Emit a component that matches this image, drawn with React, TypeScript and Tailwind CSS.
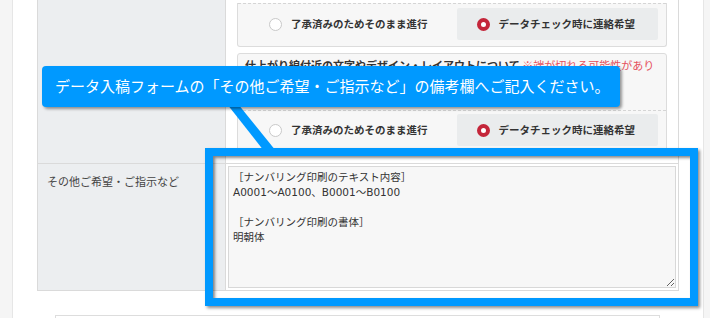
import React from 'react';

const jp = { fontFamily: '"Noto Sans CJK JP", "Liberation Sans", sans-serif' };
// Latin in a wider face, CJK falls through to Noto
const memo = { fontFamily: '"DejaVu Sans", "Noto Sans CJK JP", sans-serif' };

function Radio({ checked }: { checked?: boolean }) {
  if (checked) {
    return <span className="block h-[13px] w-[13px] shrink-0 rounded-full border-[4px] border-[#c4263a] bg-white" />;
  }
  return <span className="block h-[13px] w-[13px] shrink-0 rounded-full border border-[#c9c9c9] bg-white" />;
}

function Options() {
  return (
    <div className="grid grid-cols-2 gap-[6px] pl-[11px] pr-[8px]">
      <div className="flex h-[32px] items-center gap-[9px] pl-[20px]">
        <Radio />
        <span className="text-[10.5px] font-bold text-[#333]">了承済みのためそのまま進行</span>
      </div>
      <div className="flex h-[32px] items-center gap-[9px] rounded-[2px] bg-[#eaeced] pl-[20px]">
        <Radio checked />
        <span className="text-[10.5px] font-bold text-[#333]">データチェック時に連絡希望</span>
      </div>
    </div>
  );
}

export default function App() {
  return (
    <div className="relative flex h-[318px] w-[710px] overflow-hidden bg-white" style={jp}>
      {/* side strips */}
      <div className="w-[13px] shrink-0 border-r border-[#e6e6e6] bg-[#f5f5f5]" />

      <div className="w-[690px] shrink-0 pl-[24px]">
        <div className="w-[642px] border-x border-b border-[#dadada]">
          {/* row 1 */}
          <div className="flex h-[164px] border-b border-[#dadada]">
            <div className="w-[188px] shrink-0 border-r border-[#dadada] bg-[#eceef0]" />
            <div className="flex-1 px-[11px]">
              <div className="h-[44px] rounded-b-[3px] border-x border-b border-[#dcdcdc] bg-[#f7f7f7]">
                <div className="mt-[3px] border-t border-dashed border-[#d5d5d5] pt-[4px]">
                  <Options />
                </div>
              </div>
              <div className="mt-[6px] h-[101px] rounded-[3px] border border-[#dcdcdc] bg-[#f7f7f7]">
                <p className="px-[7px] pt-[3px] text-[11px] font-bold leading-[17px] text-[#333]">
                  仕上がり線付近の文字やデザイン・レイアウトについて{' '}
                  <span className="font-normal text-[#e5505c]">
                    ※端が切れる可能性があり
                    <br />
                    ますのでご確認ください。
                  </span>
                </p>
                <div className="mt-[19px] border-t border-dashed border-[#d5d5d5] pt-[3px]">
                  <Options />
                </div>
              </div>
            </div>
          </div>

          {/* row 2 */}
          <div className="flex h-[126px]">
            <div className="w-[188px] shrink-0 border-r border-[#dadada] bg-[#eceef0] pl-[9px] pt-[9px] text-[11px] leading-[16px] text-[#444]">
              その他ご希望・ご指示など
            </div>
            <div className="flex-1 p-[2px]">
              <textarea
                readOnly
                className="block h-[122px] w-full resize border border-[#d8d8d8] bg-[#f7f7f7] px-[4px] py-[3px] text-[10.5px] leading-[15px] text-[#333] outline-none"
                style={memo}
                defaultValue={'［ナンバリング印刷のテキスト内容］\nA0001～A0100、B0001～B0100\n\n［ナンバリング印刷の書体］\n明朝体'}
              />
            </div>
          </div>
        </div>

        <div className="ml-[18px] mt-[24px] h-[40px] w-[605px] border border-[#dddddd] bg-white" />
      </div>

      <div className="flex-1 border-l border-[#e6e6e6] bg-[#f5f5f5]" />

      {/* highlight frame */}
      <div className="absolute left-[205px] top-[148px] h-[158px] w-[493px] border-[8px] border-[#0099ff] shadow-[2px_2px_3px_rgba(0,0,0,0.45),inset_2px_2px_3px_rgba(0,0,0,0.45)]" />

      {/* callout tail */}
      <svg className="absolute left-0 top-0" width="710" height="318">
        <polygon points="227,104 238,104 276,151 264,151" fill="#0099ff" />
      </svg>

      {/* callout */}
      <div className="absolute left-[42px] top-[66px] flex h-[41px] w-[578px] items-center rounded-[4px] bg-[#0099ff] pl-[13px] text-[15px] text-white shadow-[2px_2px_3px_rgba(0,0,0,0.4)]">
        データ入稿フォームの「その他ご希望・ご指示など」の備考欄へご記入ください。
      </div>
    </div>
  );
}
